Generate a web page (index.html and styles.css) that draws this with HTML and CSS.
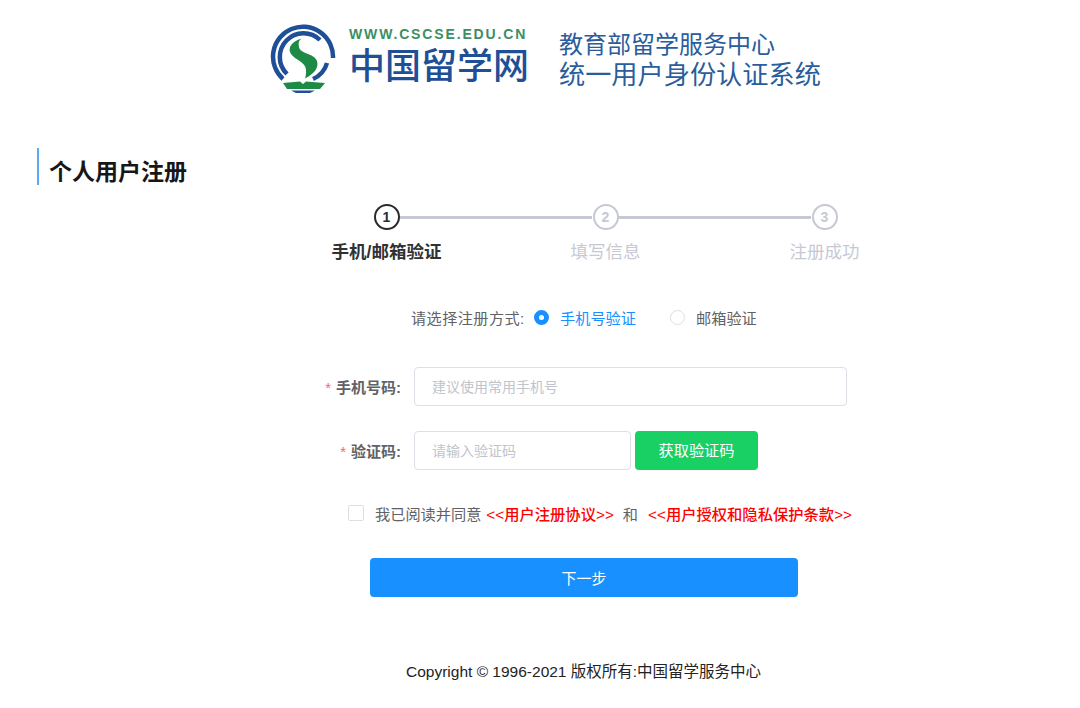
FILE: index.html
```html
<!DOCTYPE html>
<html lang="zh-CN">
<head>
    <meta charset="UTF-8">
    <title>个人用户注册</title>
    <link rel="stylesheet" href="styles.css">
</head>
<body>
    <!-- Header -->
    <header class="header">
        <svg class="logo-mark" viewBox="0 0 66 74" width="66" height="74">
            <path d="M63 36 A30 30 0 1 0 13 57" fill="none" stroke="#1f4f96" stroke-width="4.5"/>
            <path d="M50 18 A23 23 0 1 0 17 52" fill="none" stroke="#1f4f96" stroke-width="4.5"/>
            <path d="M57 41 A25 25 0 0 1 43 57" fill="none" stroke="#1f4f96" stroke-width="4.5"/>
            <path d="M31.5 16.5 C22 19 17 26 21 32 C25 38 36 40 36 48 C36 51 36 54 35 56.5 C44 52 49 46 47 39 C44 31 30 32 29 25 C28 21 29 18 31.5 16.5 Z" fill="#1e8a45"/>
            <path d="M13 61 L30 59.5 L33 62 L36 59.5 L55 61 L50 67 L17 67 Z" fill="#1e8a45"/>
            <path d="M21 68.5 H45 L40 71 H26 Z" fill="#1f4f96"/>
        </svg>
        <div class="logo-text">
            <div class="logo-url">WWW.CSCSE.EDU.CN</div>
            <div class="logo-name">中国留学网</div>
        </div>
        <div class="system-name">
            <div class="system-top">教育部留学服务中心</div>
            <div class="system-bottom">统一用户身份认证系统</div>
        </div>
    </header>

    <h1 class="page-title">个人用户注册</h1>

    <!-- Steps -->
    <div class="steps">
        <div class="step active">
            <div class="step-head"><span class="step-num">1</span></div>
            <div class="step-label">手机/邮箱验证</div>
        </div>
        <div class="step">
            <div class="step-head"><span class="step-num">2</span></div>
            <div class="step-label">填写信息</div>
        </div>
        <div class="step last">
            <div class="step-head"><span class="step-num">3</span></div>
            <div class="step-label">注册成功</div>
        </div>
    </div>

    <!-- Form -->
    <div class="method-row">
        <span class="method-label">请选择注册方式:</span>
        <span class="radio checked"></span>
        <span class="radio-text checked-text">手机号验证</span>
        <span class="radio"></span>
        <span class="radio-text">邮箱验证</span>
    </div>

    <div class="form-row phone-row">
        <label class="form-label"><i>*</i>手机号码:</label>
        <input class="input input-wide" type="text" placeholder="建议使用常用手机号">
    </div>
    <div class="form-row code-row">
        <label class="form-label"><i>*</i>验证码:</label>
        <input class="input input-code" type="text" placeholder="请输入验证码">
        <button class="code-btn">获取验证码</button>
    </div>

    <div class="agree-row">
        <span class="checkbox"></span>
        <span class="agree-text">我已阅读并同意</span>
        <a class="agree-link">&lt;&lt;用户注册协议&gt;&gt;</a>
        <span class="agree-text">和</span>
        <a class="agree-link">&lt;&lt;用户授权和隐私保护条款&gt;&gt;</a>
    </div>

    <div class="next-row">
        <button class="next-btn">下一步</button>
    </div>

    <footer class="footer">Copyright © 1996-2021 版权所有:中国留学服务中心</footer>
</body>
</html>
```

FILE: styles.css
```css
body {
    margin: 0;
    height: 708px;
    overflow: hidden;
    background-color: #fff;
    font-family: "Liberation Sans", "Noto Sans CJK SC", sans-serif;
    color: #606266;
}
.header {
    display: flex;
    align-items: flex-start;
    padding: 22px 0 0 270px;
    height: 126px;
    box-sizing: border-box;
}
.logo-mark {
    flex: none;
}
.logo-text {
    margin-left: 13px;
    width: 196px;
    margin-right: 14px;
}
.logo-url {
    font-size: 14px;
    font-weight: bold;
    line-height: 16px;
    letter-spacing: 1.85px;
    color: #3b8f63;
    margin-top: 4px;
    white-space: nowrap;
}
.logo-name {
    font-size: 36px;
    line-height: 44px;
    font-weight: 500;
    color: #1f4f96;
    margin-top: 3px;
    white-space: nowrap;
}
.system-name {
    color: #2a5d9c;
    margin-top: 8px;
    white-space: nowrap;
}
.system-top {
    font-size: 24px;
    line-height: 30px;
}
.system-bottom {
    font-size: 26.2px;
    line-height: 30px;
}
.page-title {
    margin: 22px 0 0 37px;
    height: 37px;
    padding-left: 10px;
    border-left: 2px solid #5aa9f5;
    font-size: 23px;
    line-height: 49px;
    font-weight: bold;
    color: #17171a;
    box-sizing: border-box;
}
.steps {
    display: flex;
    margin: 19px 0 0 277px;
}
.step {
    width: 219px;
    text-align: center;
}
.step-head {
    position: relative;
    height: 26px;
}
.step-head::after {
    content: "";
    position: absolute;
    left: 123px;
    width: 192px;
    top: 12px;
    height: 3px;
    background-color: #c6c9d4;
}
.last .step-head::after {
    display: none;
}
.step-num {
    display: inline-block;
    width: 26px;
    height: 26px;
    box-sizing: border-box;
    border: 2px solid #c6c9d4;
    border-radius: 50%;
    font-size: 14px;
    font-weight: bold;
    line-height: 22px;
    color: #c6c9d4;
}
.step-label {
    margin-top: 10px;
    font-size: 17.5px;
    line-height: 24px;
    color: #c6c9d4;
}
.active .step-num {
    border-color: #2b2b2e;
    color: #2b2b2e;
}
.active .step-label {
    color: #303133;
    font-weight: bold;
}
.method-row {
    display: flex;
    align-items: center;
    margin: 41px 0 0 411px;
    height: 24px;
    font-size: 15.2px;
}
.method-label {
    width: 123px;
    letter-spacing: 0.4px;
    white-space: nowrap;
}
.radio {
    width: 15px;
    height: 15px;
    box-sizing: border-box;
    border: 1px solid #dcdfe6;
    border-radius: 50%;
}
.radio.checked {
    border: 5px solid #1890ff;
    background-color: #fff;
}
.radio-text {
    margin-left: 11px;
    width: 110px;
    white-space: nowrap;
}
.checked-text {
    color: #1890ff;
    width: 110px;
}
.form-row {
    display: flex;
    align-items: center;
    height: 39px;
}
.phone-row {
    margin-top: 38px;
}
.code-row {
    margin-top: 25px;
}
.form-label {
    width: 401px;
    margin-right: 13px;
    text-align: right;
    font-size: 15px;
    font-weight: bold;
    flex: none;
}
.form-label i {
    font-style: normal;
    font-weight: normal;
    color: #f56c6c;
    margin-right: 5px;
}
.input {
    height: 39px;
    box-sizing: border-box;
    border: 1px solid #dcdfe6;
    border-radius: 4px;
    padding: 0 17px;
    font-family: inherit;
    font-size: 14px;
    outline: none;
}
.input::placeholder {
    color: #c0c4cc;
}
.input-wide {
    width: 433px;
}
.input-code {
    width: 217px;
}
.code-btn {
    width: 123px;
    height: 39px;
    margin-left: 4px;
    padding: 0 0 3px;
    border: none;
    border-radius: 4px;
    background-color: #19d065;
    color: #fff;
    font-family: inherit;
    font-size: 15.2px;
}
.agree-row {
    display: flex;
    align-items: center;
    margin: 32px 0 0 348px;
    height: 22px;
    font-size: 15.2px;
    white-space: nowrap;
}
.checkbox {
    width: 16px;
    height: 16px;
    box-sizing: border-box;
    border: 1px solid #dcdfe6;
    border-radius: 2px;
    margin-right: 11px;
}
.agree-link {
    color: #ff0000;
    font-weight: 500;
    font-size: 15.3px;
    margin: 0 9px 0 5px;
}
.agree-text + .agree-link + .agree-text + .agree-link {
    margin-left: 10px;
}
.next-row {
    margin: 34px 0 0 370px;
}
.next-btn {
    display: block;
    width: 428px;
    height: 39px;
    border: none;
    border-radius: 4px;
    background-color: #1890ff;
    color: #fff;
    font-family: inherit;
    font-size: 15px;
}
.footer {
    margin: 64px 0 0 406px;
    font-size: 15.5px;
    line-height: 22px;
    color: #222;
    white-space: nowrap;
}
```
